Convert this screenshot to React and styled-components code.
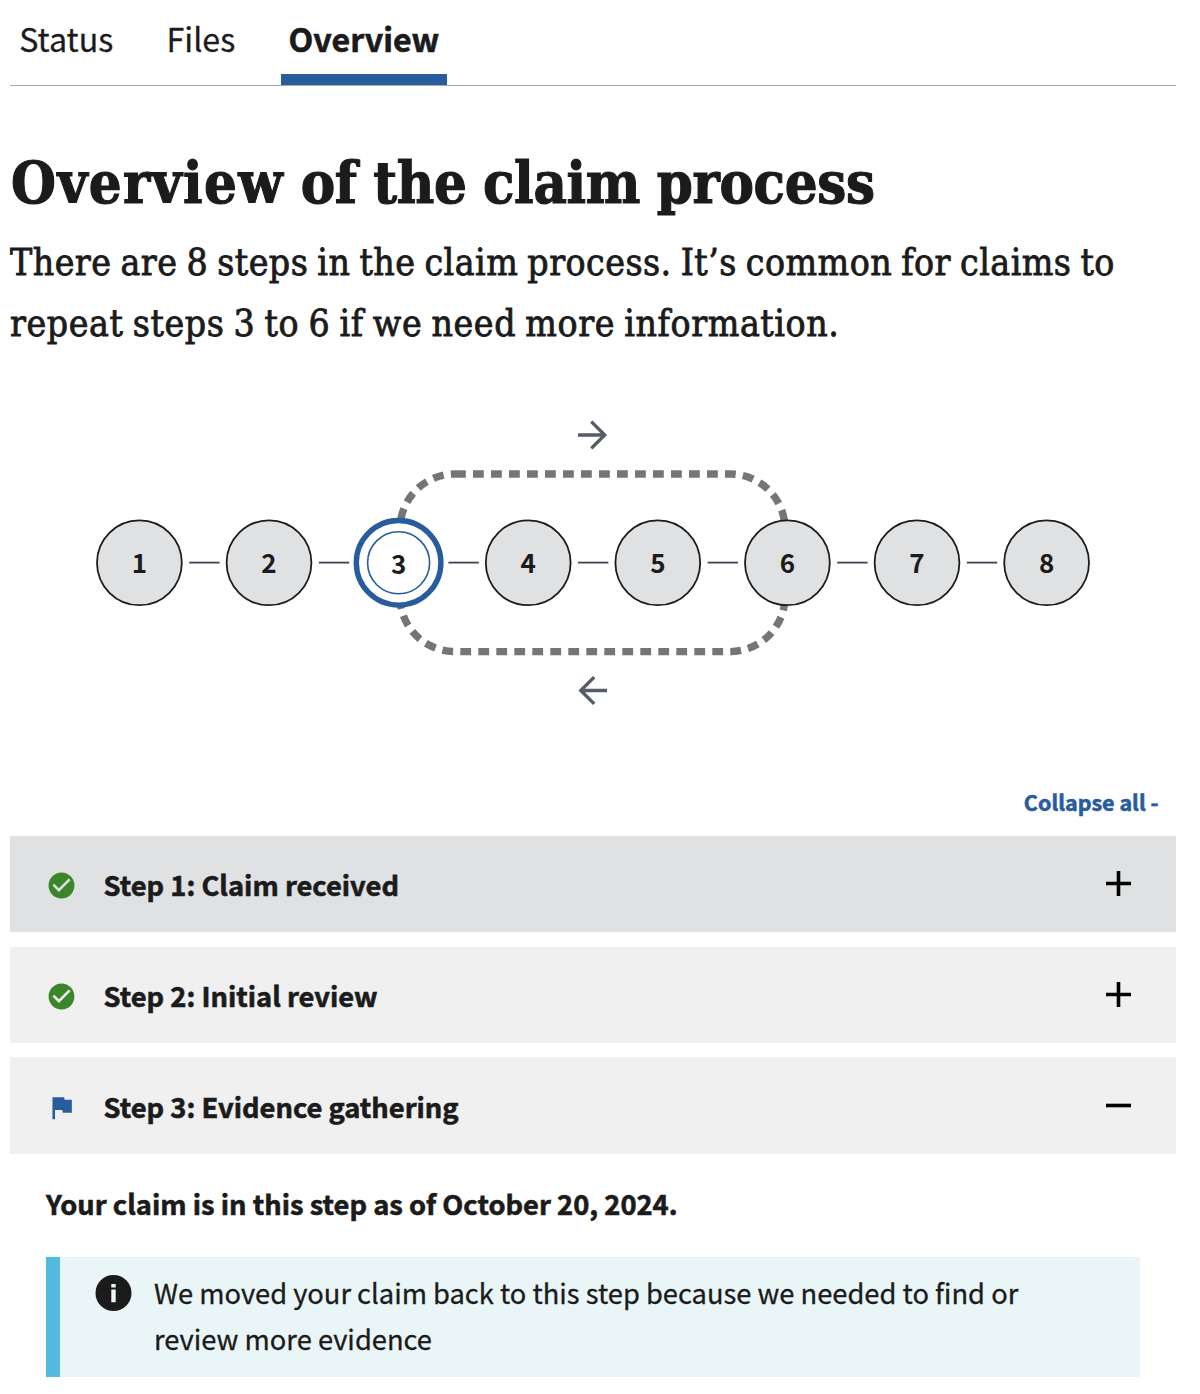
import React from 'react';
import styled, { createGlobalStyle, css } from 'styled-components';

const sans = '"Noto Sans CJK SC", "Noto Sans", sans-serif';
const serif = '"DejaVu Serif Condensed", "DejaVu Serif", serif';
const ink = '#1b1b1b';
const blue = '#275c9d';

const GlobalStyle = createGlobalStyle`
  * { box-sizing: border-box; }
  body {
    margin: 0;
    background: #fff;
    color: ${ink};
    font-family: ${sans};
    -webkit-text-stroke: 0.3px currentColor;
  }
`;

const strong = css`
  font-weight: 700;
  -webkit-text-stroke: 0.6px currentColor;
`;

const Page = styled.main`
  width: 1186px;
  height: 1394px;
  padding: 0 10px;
  overflow: hidden;
`;

const Tabs = styled.nav`
  display: flex;
  gap: 38.2px;
  height: 86px;
  padding-left: 1.8px;
  border-bottom: 1px solid #a9aaab;
`;

const Tab = styled.a`
  height: 85px;
  padding: 3px 7.5px 0;
  font-size: 32.2px;
  line-height: 71px;
  white-space: nowrap;
  ${(p) =>
    p.$active &&
    css`
      ${strong}
      border-bottom: 11px solid ${blue};
    `}
`;

const Title = styled.h1`
  margin: 62px 0 0;
  padding-left: 1px;
  font: 700 57.4px/70px ${serif};
  font-stretch: condensed;
  letter-spacing: -0.3px;
  word-spacing: -1.2px;
  white-space: nowrap;
  -webkit-text-stroke: 1.1px ${ink};
`;

const Tracked = styled.span`
  letter-spacing: ${(p) => p.$by}px;
`;

const Intro = styled.p`
  margin: 14px 0 0;
  font: 400 37.1px/61px ${serif};
  font-stretch: condensed;
  word-spacing: -2px;
  white-space: nowrap;
  -webkit-text-stroke: 0.8px ${ink};
`;

const Diagram = styled.svg`
  display: block;
  margin: 39px 0 55px;
`;

const NodeNumber = styled.text`
  font: 700 26px ${sans};
  fill: ${ink};
  text-anchor: middle;
  -webkit-text-stroke: 0;
`;

const Toolbar = styled.div`
  display: flex;
  justify-content: flex-end;
  padding-right: 17.5px;
  margin-bottom: 18px;
`;

const CollapseLink = styled.a`
  color: ${blue};
  font-size: 21.5px;
  line-height: 32px;
  ${strong}
`;

const Accordion = styled.div`
  display: flex;
  flex-direction: column;
`;

const Row = styled.div`
  display: flex;
  align-items: center;
  height: ${(p) => p.$height || 96}px;
  margin-bottom: ${(p) => p.$after || 0}px;
  padding: 0 45px 0 35.75px;
  background: ${(p) => (p.$hovered ? '#dfe1e2' : '#f0f0f0')};
`;

const StatusIcon = styled.svg`
  flex: none;
  width: 31px;
  height: 31px;
  margin-top: ${(p) => p.$drop}px;
  fill: ${(p) => p.$color};
`;

const RowLabel = styled.span`
  flex: 1;
  margin-left: 26.75px;
  font-size: 27.3px;
  ${strong}
`;

const ToggleIcon = styled.svg`
  flex: none;
  width: 25px;
  height: 25px;
  margin-bottom: 1px;
  stroke: #000;
  stroke-width: 3.6;
`;

const Panel = styled.section`
  padding: 26px 36px 0;
`;

const PanelLead = styled.p`
  margin: 0 0 31px;
  font-size: 27.3px;
  line-height: 46px;
  ${strong}
`;

const Alert = styled.div`
  display: flex;
  align-items: flex-start;
  gap: 22px;
  padding: 12px 40px 16px 35px;
  border-left: 14px solid #54b9df;
  background: #eaf5f7;
`;

const InfoIcon = styled.svg`
  flex: none;
  width: 37px;
  height: 36px;
  margin-top: 6px;
`;

const AlertText = styled.p`
  margin: 0;
  font-size: 27.3px;
  line-height: 46px;
`;

const STEPS = [1, 2, 3, 4, 5, 6, 7, 8];
const CURRENT = 3;
const PITCH = 129.6;
const FIRST_X = 129.4;
const MID_Y = 169.8;

function ClaimDiagram() {
  return (
    <Diagram width="1166" height="338" viewBox="0 0 1166 338">
      <rect
        x="390" y="81" width="385" height="177.6" rx="55"
        fill="none" stroke="#757575" strokeWidth="7.4" strokeDasharray="10.8 7.2"
      />
      <g fill="none" stroke="#565c65" strokeWidth="3.4">
        <path d="M568 42H595M581.3 28.6L594.7 42L581.3 55.4" />
        <path d="M597 297.5H571M584.2 284.1L570.8 297.5L584.2 310.9" />
      </g>
      {STEPS.map((n, i) => {
        const x = FIRST_X + PITCH * i;
        const current = n === CURRENT;
        return (
          <g key={n}>
            {current ? (
              <>
                <circle cx={x} cy={MID_Y} r="42.3" fill="#fff" stroke={blue} strokeWidth="5.4" />
                <circle cx={x} cy={MID_Y} r="31" fill="#fff" stroke={blue} strokeWidth="1.6" />
              </>
            ) : (
              <circle cx={x} cy={MID_Y} r="42.4" fill="#dfe1e2" stroke={ink} strokeWidth="1.8" />
            )}
            <NodeNumber x={x} y={current ? 180.6 : 179.8}>{n}</NodeNumber>
            {n < STEPS.length && (
              <path d={`M${x + 49.8} ${MID_Y - 0.2}h30.4`} stroke="#3d4551" strokeWidth="1.8" />
            )}
          </g>
        );
      })}
    </Diagram>
  );
}

const CheckIcon = () => (
  <StatusIcon viewBox="0 0 24 24" $color="#3b862b" $drop={3.5}>
    <path d="M12 2a10 10 0 1 0 0 20 10 10 0 0 0 0-20zm-2 15l-5-5 1.41-1.41L10 14.17l7.59-7.59L19 8z" />
  </StatusIcon>
);

const FlagIcon = () => (
  <StatusIcon viewBox="0 0 24 24" $color={blue} $drop={4}>
    <path d="M14.4 6L14 4H5v17h2v-7h5.6l.4 2h7V6z" />
  </StatusIcon>
);

const Toggle = ({ open }) => (
  <ToggleIcon viewBox="0 0 25 25">
    <path d={open ? 'M0 12.5H25' : 'M0 12.5H25M12.5 0V25'} />
  </ToggleIcon>
);

export default function App() {
  return (
    <>
      <GlobalStyle />
      <Page>
        <Tabs>
          <Tab>Status</Tab>
          <Tab>Files</Tab>
          <Tab $active>Overview</Tab>
        </Tabs>
        <Title>
          <Tracked $by={1.4}>Overview</Tracked> of the claim process
        </Title>
        <Intro>
          <Tracked $by={0.46}>There are 8 steps in the claim process. It’s common for claims to</Tracked>
          <br />
          <Tracked $by={0.59}>repeat steps 3 to 6 if we need more information.</Tracked>
        </Intro>
        <ClaimDiagram />
        <Toolbar>
          <CollapseLink>Collapse all -</CollapseLink>
        </Toolbar>
        <Accordion>
          <Row $hovered $after={15}>
            <CheckIcon />
            <RowLabel>Step 1: Claim received</RowLabel>
            <Toggle />
          </Row>
          <Row $after={14}>
            <CheckIcon />
            <RowLabel>Step 2: Initial review</RowLabel>
            <Toggle />
          </Row>
          <Row $height={97}>
            <FlagIcon />
            <RowLabel>Step 3: Evidence gathering</RowLabel>
            <Toggle open />
          </Row>
          <Panel>
            <PanelLead>Your claim is in this step as of October 20, 2024.</PanelLead>
            <Alert>
              <InfoIcon viewBox="0 0 37 36">
                <circle cx="18.5" cy="18" r="18" fill={ink} />
                <path d="M16.3 9H20.7V12.4H16.3zM16.3 14.6H20.7V27.2H16.3z" fill="#eaf5f7" />
              </InfoIcon>
              <AlertText>
                We moved your claim back to this step because we needed to find or review more evidence
              </AlertText>
            </Alert>
          </Panel>
        </Accordion>
      </Page>
    </>
  );
}
